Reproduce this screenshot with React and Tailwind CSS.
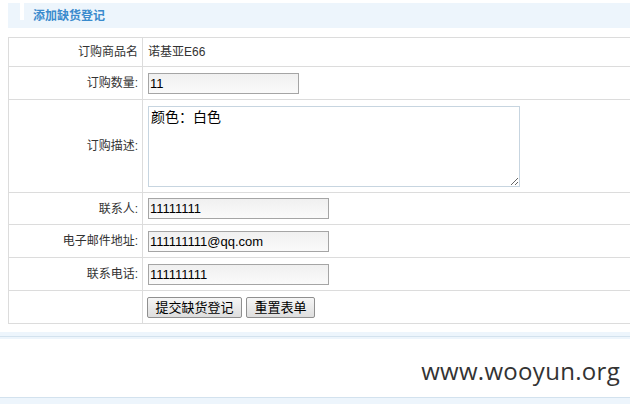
import React from 'react';

const font = { fontFamily: '"Liberation Sans", Arial, "Noto Sans CJK SC", sans-serif' };

function Row({ label, h, children }) {
  return (
    <div className={`flex border-b border-[#dcdcdc] ${h}`}>
      <div className="w-[134px] shrink-0 border-r border-[#dcdcdc] flex items-center justify-end pr-[4px] text-[12px] text-[#333]">
        {label}
      </div>
      <div className="flex-1 flex items-center pl-[5px]">{children}</div>
    </div>
  );
}

function TextInput({ value, w }) {
  return (
    <input
      readOnly
      value={value}
      className={`${w} h-[21px] border border-[#a5a5a5] bg-gradient-to-b from-[#f0f0f0] to-[#fafafa] px-[1px] text-[13px] text-black outline-none`}
      style={font}
    />
  );
}

function Btn({ children, w }) {
  return (
    <button
      type="button"
      className={`${w} h-[21px] border border-[#8f8f8f] rounded-[2px] bg-gradient-to-b from-[#f6f6f6] to-[#dedede] text-[13px] text-black leading-none`}
      style={font}
    >
      {children}
    </button>
  );
}

export default function App() {
  return (
    <div className="w-[630px] h-[404px] bg-white overflow-hidden" style={font}>
      <div className="ml-[8px] mt-[3px] h-[25px] bg-[#edf5fc] flex pl-[12px]">
        <div className="w-[4px] h-[17px] bg-white shrink-0" />
        <div className="ml-[9px] self-center text-[12px] font-bold text-[#3a8bcd]">添加缺货登记</div>
      </div>

      <div className="ml-[8px] mt-[9px] w-[624px] border border-b-0 border-[#dcdcdc]">
        <Row label="订购商品名" h="h-[29px]">
          <span className="text-[12px] text-[#333]">诺基亚E66</span>
        </Row>
        <Row label="订购数量:" h="h-[33px]">
          <TextInput value="11" w="w-[151px]" />
        </Row>
        <Row label="订购描述:" h="h-[93px]">
          <textarea
            readOnly
            value="颜色：白色"
            className="w-[372px] h-[81px] border border-[#c7d5e0] bg-white px-[2px] pt-[1px] text-[14px] leading-[18px] text-black outline-none"
            style={font}
          />
        </Row>
        <Row label="联系人:" h="h-[32px]">
          <TextInput value="11111111" w="w-[181px]" />
        </Row>
        <Row label="电子邮件地址:" h="h-[33px]">
          <TextInput value="111111111@qq.com" w="w-[181px]" />
        </Row>
        <Row label="联系电话:" h="h-[33px]">
          <TextInput value="111111111" w="w-[181px]" />
        </Row>
        <Row label="" h="h-[33px]">
          <div className="flex gap-[4px] -ml-[1px]">
            <Btn w="w-[95px]">提交缺货登记</Btn>
            <Btn w="w-[69px]">重置表单</Btn>
          </div>
        </Row>
      </div>

      <div className="mt-[8px] h-[7px] bg-[#edf5fc] flex flex-col">
        <div className="mt-[4px] h-[1px] bg-[#d3e2ee]" />
      </div>

      <div className="h-[58px] flex items-center justify-end pr-[10px] pt-[6px]">
        <span className="text-[24px] text-[#333] tracking-[0.3px]" style={{ fontFamily: '"Open Sans", sans-serif' }}>
          www.wooyun.org
        </span>
      </div>

      <div className="h-[7px] bg-[#edf5fc] border-t border-[#d3e2ee]" />
    </div>
  );
}
